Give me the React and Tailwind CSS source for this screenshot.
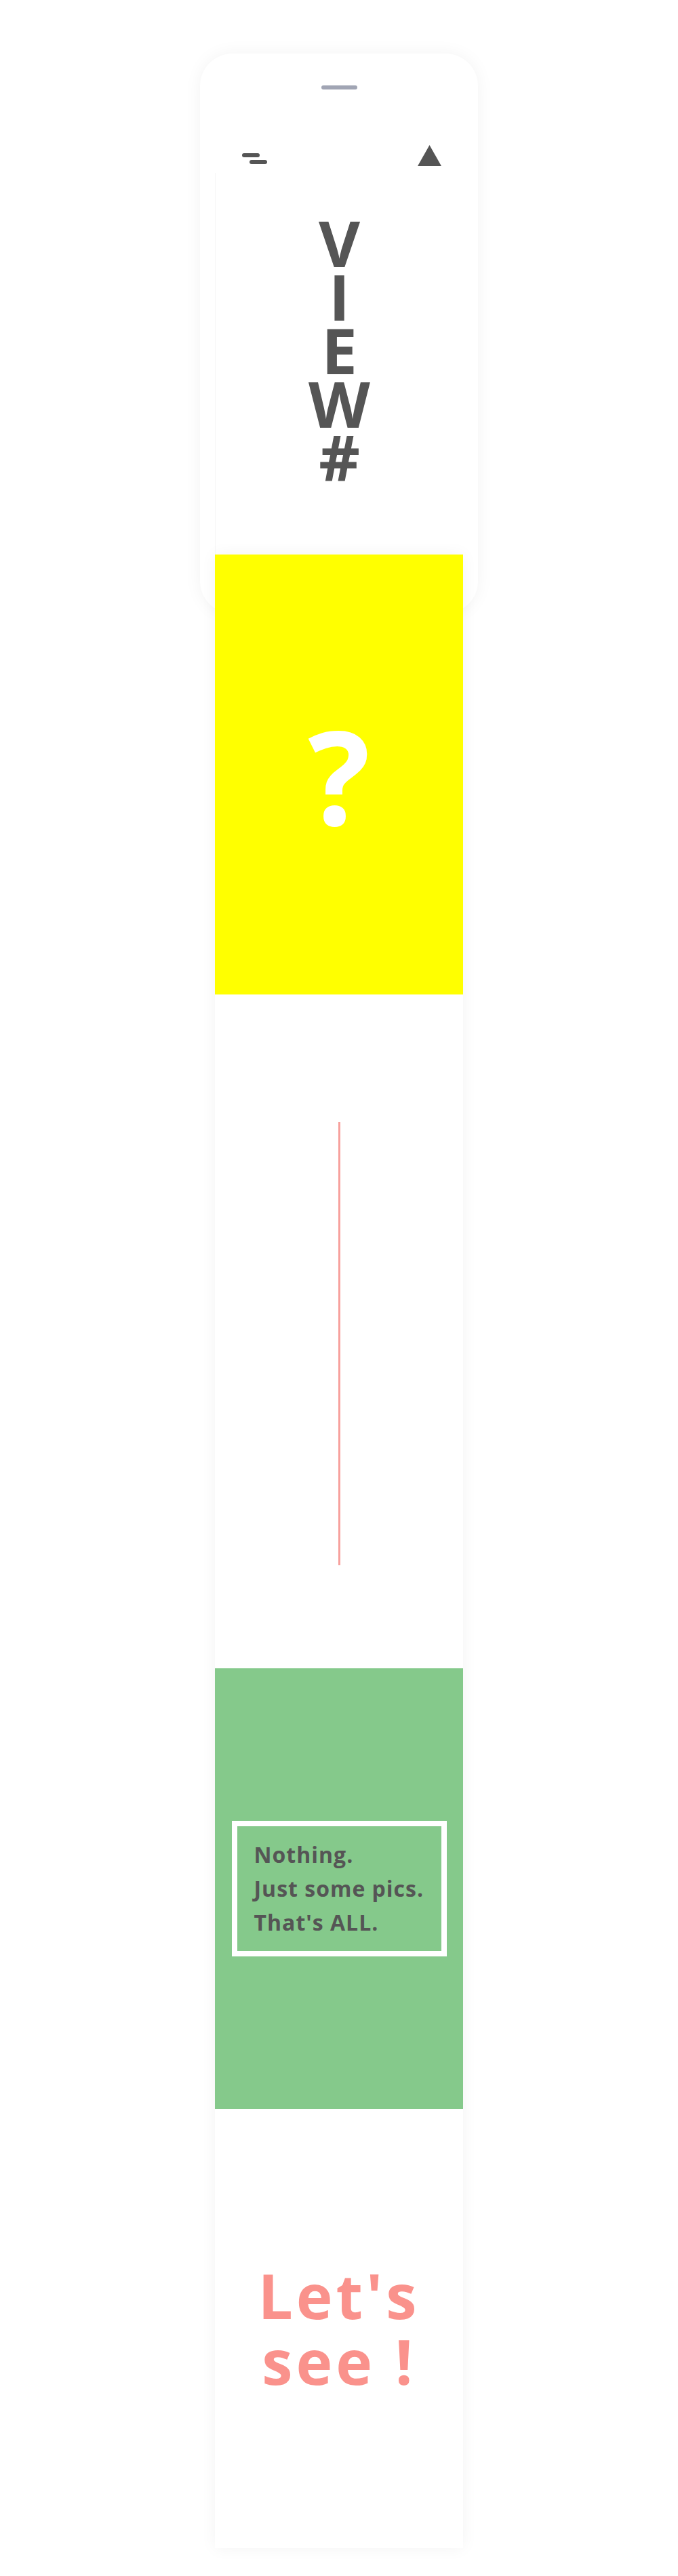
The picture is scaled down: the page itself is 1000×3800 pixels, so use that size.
import React from 'react';

const MenuIcon = () => (
  <div className="flex flex-col gap-[4px]">
    <span className="block w-[26px] h-[6px] rounded-full bg-[#555555]" />
    <span className="block w-[26px] h-[6px] rounded-full bg-[#555555] ml-[11px]" />
  </div>
);

const TriangleIcon = () => (
  <svg width="35" height="31" viewBox="0 0 35 31">
    <polygon points="17.5,0 35,31 0,31" fill="#555555" />
  </svg>
);

const App = () => {
  return (
    <div className="min-h-[3800px] bg-white font-['Open_Sans',sans-serif] pt-[79px]">
      {/* Phone card */}
      <div className="mx-auto w-[410px] h-[826px] rounded-[48px] bg-white shadow-[0_0_26px_rgba(0,0,0,0.05)] pt-[47px]">
        <div className="mx-auto w-[53px] h-[6px] rounded-full bg-[#a1a5b4]" />
        <div className="flex items-end justify-between pl-[62px] pr-[54px] mt-[82px]">
          <div className="pb-[3px]">
            <MenuIcon />
          </div>
          <TriangleIcon />
        </div>
      </div>

      {/* Content column */}
      <div className="relative z-10 mx-auto w-[366px] -mt-[650px]">
        {/* Title */}
        <div className="h-[563px] pt-[64px] bg-white border-l border-[#f6f6f6] text-center">
          <p className="text-[94px] leading-[79px] font-bold text-[#555555]">
            V
            <br />
            I
            <br />
            E
            <br />
            W
            <br />#
          </p>
        </div>

        <div className="bg-white shadow-[0_0_22px_rgba(0,0,0,0.05)]">
          {/* Yellow */}
          <div className="h-[649px] bg-[#ffff00] flex items-center justify-center">
            <span className="text-[192px] leading-none font-bold text-white">?</span>
          </div>

          {/* Line */}
          <div className="h-[994px] pt-[188px] flex justify-center">
            <div className="w-[3px] h-[654px] bg-[#f7a19d]" />
          </div>

          {/* Green */}
          <div className="h-[650px] bg-[#85c98b] flex items-center justify-center">
            <div className="w-[317px] border-[8px] border-white px-[25px] py-[17px]">
              <p className="text-[32px] leading-[50px] font-bold tracking-[1px] text-[#555555]">
                Nothing.
                <br />
                Just some pics.
                <br />
                That's ALL.
              </p>
            </div>
          </div>

          {/* Let's see */}
          <div className="h-[648px] flex items-center justify-center">
            <p className="text-center text-[91px] leading-[97px] font-bold tracking-[5px] text-[#fa928c]">
              Let's
              <br />
              see !
            </p>
          </div>
        </div>
      </div>
    </div>
  );
};

export default App;
